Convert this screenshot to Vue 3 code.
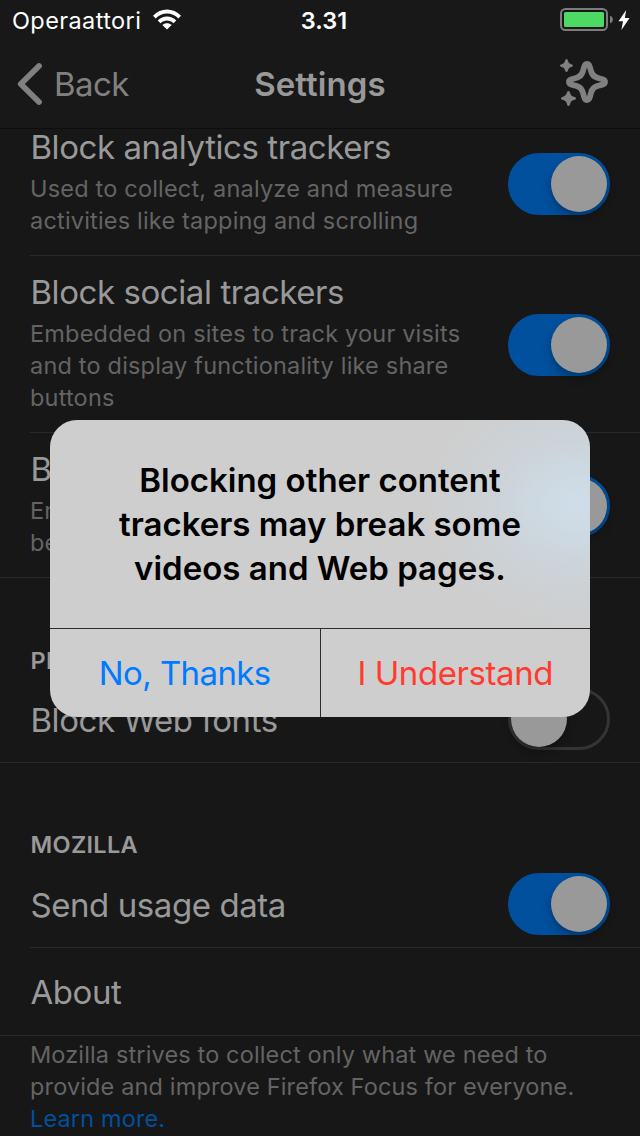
<script setup>
const blocking = [
  { key: 'analytics', title: 'Block analytics trackers', lines: ['Used to collect, analyze and measure', 'activities like tapping and scrolling'] },
  { key: 'social', title: 'Block social trackers', lines: ['Embedded on sites to track your visits', 'and to display functionality like share', 'buttons'] },
  { key: 'content', title: 'Block other content trackers', lines: ['Enabling may cause some pages to', 'behave unexpectedly'] },
]
</script>

<template>
  <div class="screen">
    <header class="top">
      <div class="status">
        <div class="carrier">
          <span class="carrier-name">Operaattori</span>
          <svg class="wifi" width="30" height="22" viewBox="0 0 30 22">
            <path d="M1 6.7C8.8-1.6 21.2-1.6 29 6.7L26.3 9.4C20 3 10 3 3.7 9.4Z" />
            <path d="M5.7 11.5C10.9 6.3 19.1 6.3 24.3 11.5L21.5 14.2C17.9 10.7 12.1 10.7 8.5 14.2Z" />
            <path d="M10.3 16.1C13 13.6 17 13.6 19.7 16.1L15 20.6Z" />
          </svg>
        </div>
        <span class="clock">3.31</span>
        <div class="power">
          <svg width="54" height="24" viewBox="0 0 54 24">
            <rect x="1" y="1" width="46" height="21" rx="4.5" fill="none" stroke="#7c7c7c" stroke-width="2" />
            <rect x="4" y="4" width="40" height="15" rx="1.5" fill="#4cd964" />
            <path d="M50 7.5Q53 9 53 11.5T50 15.5Z" fill="#7c7c7c" />
          </svg>
          <svg width="12" height="20" viewBox="0 0 12 20"><path d="M8.2 0L.5 11.2H5L3.4 20L11.6 8H6.8Z" fill="#fff" /></svg>
        </div>
      </div>
      <nav class="nav">
        <div class="back">
          <svg width="26" height="44" viewBox="0 0 26 44"><path d="M23 4L4.8 22L23 40" fill="none" stroke="#808080" stroke-width="5.8" stroke-linecap="round" stroke-linejoin="round" /></svg>
          <span class="back-label">Back</span>
        </div>
        <h1 class="heading">Settings</h1>
        <svg class="sparkle" width="50" height="50" viewBox="0 0 50 50">
          <path d="M27 4.8C29.8 4.8 29.9 8.7 31.2 12.7C32.3 16.4 33.7 17.7 37.2 18.8C41.2 20 45 20.2 45 22.9C45 25.6 41.2 25.8 37.2 27C33.7 28.1 32.3 29.4 31.2 33.1C29.9 37.1 29.8 41 27 41C24.2 41 24.1 37.1 22.8 33.1C21.7 29.4 20.3 28.1 16.8 27C12.8 25.8 9 25.6 9 22.9C9 20.2 12.8 20 16.8 18.8C20.3 17.7 21.7 16.4 22.8 12.7C24.1 8.7 24.2 4.8 27 4.8Z" fill="none" stroke="#808080" stroke-width="5.8" stroke-linejoin="round" />
          <path d="M6.5 0Q7.7 0 8 1.9Q8.5 4.7 11.2 5.2Q13 5.5 13 6.6Q13 7.7 11.2 8Q8.5 8.5 8 11.2Q7.7 13 6.5 13Q5.3 13 5 11.2Q4.5 8.5 1.8 8Q0 7.7 0 6.6Q0 5.5 1.8 5.2Q4.5 4.7 5 1.9Q5.3 0 6.5 0Z" fill="#808080" />
          <path d="M8.5 32Q9.8 32 10.2 34Q10.8 37.1 13.9 37.7Q16 38.1 16 39.4Q16 40.7 13.9 41.1Q10.8 41.7 10.2 44.8Q9.8 47 8.5 47Q7.2 47 6.8 44.8Q6.2 41.7 3.1 41.1Q1 40.7 1 39.4Q1 38.1 3.1 37.7Q6.2 37.1 6.8 34Q7.2 32 8.5 32Z" fill="#808080" />
        </svg>
      </nav>
    </header>

    <main class="list">
      <section>
        <div v-for="row in blocking" :key="row.key" class="row" :class="row.key">
          <div class="copy">
            <div class="title">{{ row.title }}</div>
            <div v-for="line in row.lines" :key="line" class="sub">{{ line }}</div>
          </div>
          <span class="toggle on"></span>
        </div>
      </section>
      <section>
        <h2 class="label label-performance">PERFORMANCE</h2>
        <div class="row fonts">
          <div class="title">Block Web fonts</div>
          <span class="toggle"></span>
        </div>
      </section>
      <section>
        <h2 class="label label-mozilla">MOZILLA</h2>
        <div class="row usage">
          <div class="title">Send usage data</div>
          <span class="toggle on"></span>
        </div>
        <div class="row about"><div class="title">About</div></div>
        <div class="footer">
          <div class="sub">Mozilla strives to collect only what we need to</div>
          <div class="sub">provide and improve Firefox Focus for everyone.</div>
          <div class="sub link">Learn more.</div>
        </div>
      </section>
    </main>

    <div class="dialog">
      <div class="message">
        <div>Blocking other content</div>
        <div>trackers may break some</div>
        <div>videos and Web pages.</div>
      </div>
      <div class="actions">
        <button class="action cancel">No, Thanks</button>
        <button class="action confirm">I Understand</button>
      </div>
    </div>
  </div>
</template>

<style>
html, body { background: #171717; }
</style>

<style scoped>
.screen {
  position: relative;
  width: 640px;
  height: 1136px;
  overflow: hidden;
  background: #171717;
  color: #999;
  font-family: Inter, "Liberation Sans", sans-serif;
  white-space: nowrap;
}
.top { height: 128px; border-bottom: 1px solid #0e0e0e; background: #181818; }
.status {
  display: grid;
  grid-template-columns: 1fr auto 1fr;
  align-items: center;
  height: 40px;
  padding: 0 10px 0 12px;
  color: #fff;
}
.carrier { display: flex; align-items: center; gap: 11px; }
.carrier-name { font-size: 23.5px; letter-spacing: 0.4px; }
.wifi { fill: #fff; }
.clock { padding-left: 6px; font-size: 23.5px; font-weight: 600; }
.power { display: flex; align-items: center; justify-content: flex-end; gap: 4px; }
.nav {
  display: grid;
  grid-template-columns: 1fr auto 1fr;
  align-items: center;
  height: 88px;
  padding: 0 30px 0 16px;
}
.back { display: flex; align-items: center; gap: 12px; color: #808080; font-size: 33px; }
.back-label { letter-spacing: -0.6px; }
.heading { margin: 0; padding-left: 14px; font-size: 33px; font-weight: 600; line-height: 44px; letter-spacing: 0.1px; }
.sparkle { justify-self: end; }
.row {
  display: flex;
  align-items: center;
  justify-content: space-between;
  box-sizing: border-box;
  margin-left: 30px;
  padding-right: 30px;
  border-bottom: 1px solid #2a2a2b;
}
.copy { margin-bottom: 3px; }
.copy .title { margin-bottom: 5px; }
.analytics { height: 127px; padding-bottom: 18px; }
.analytics .toggle { margin-top: 2px; }
.social { height: 177px; }
.content { height: 145px; margin-left: 0; padding-left: 30px; }
.social .toggle, .content .toggle { margin-top: 2px; }
.title { padding-left: 0.4px; font-size: 33px; line-height: 42px; letter-spacing: -0.42px; color: #999; }
.sub { font-size: 23.5px; line-height: 32px; letter-spacing: 0.19px; color: #646464; }
.toggle {
  position: relative;
  flex: none;
  box-sizing: border-box;
  width: 102px;
  height: 62px;
  border: 3px solid #323438;
  border-radius: 31px;
}
.toggle::after {
  content: "";
  position: absolute;
  top: 0;
  left: 0;
  width: 56px;
  height: 56px;
  border-radius: 50%;
  background: #999;
  box-shadow: 0 5px 10px rgba(0, 0, 0, 0.3);
}
.toggle.on { border-color: #00509e; background: #00509e; }
.toggle.on::after { left: 40px; }
.label { margin: 0 0 0 30.6px; font-size: 23.5px; font-weight: 600; line-height: 30px; letter-spacing: 0.3px; color: #999; }
.label-performance { padding-top: 68px; }
.label-mozilla { padding-top: 67px; }
.fonts { height: 87px; margin-left: 0; padding-left: 30px; }
.fonts .title, .usage .title { padding-top: 2px; }
.usage { height: 88px; }
.about { height: 88px; margin-left: 0; padding-left: 30px; }
.footer { padding: 3px 30px 0; }
.footer .sub { letter-spacing: 0.14px; }
.footer .link { color: #00509e; }
.dialog {
  position: absolute;
  top: 420px;
  left: 50px;
  width: 540px;
  height: 297px;
  overflow: hidden;
  border-radius: 27px;
  background: radial-gradient(ellipse 150px 125px at 525px 84px, #cfdee9 0%, #cdd9e2 25%, rgba(204, 213, 220, 0.65) 55%, rgba(206, 206, 207, 0) 100%), #cecece;
  color: #000;
}
.message {
  box-sizing: border-box;
  height: 209px;
  padding-top: 38px;
  border-bottom: 1px solid #2c2d30;
  font-size: 33px;
  font-weight: 600;
  line-height: 44px;
  text-align: center;
}
.actions { display: flex; height: 88px; }
.action {
  flex: 1;
  margin: 0;
  padding: 0;
  border: 0;
  background: none;
  font: 33px Inter, "Liberation Sans", sans-serif;
}
.cancel { color: #007aff; letter-spacing: -0.6px; }
.confirm { border-left: 1px solid #2c2d30; color: #ff3b30; letter-spacing: -0.42px; }
</style>
